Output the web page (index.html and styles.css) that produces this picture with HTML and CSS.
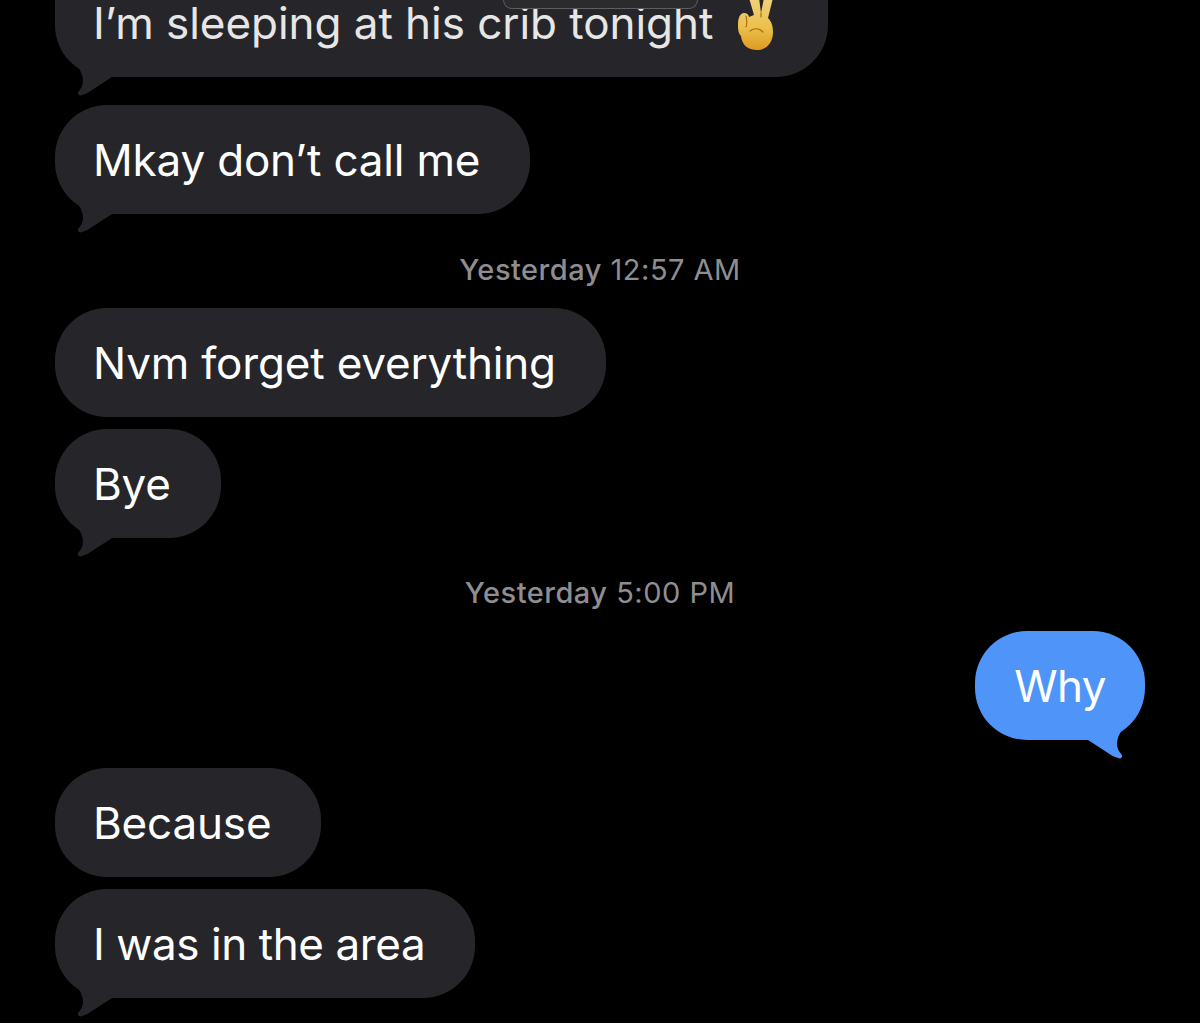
FILE: index.html
```html
<!DOCTYPE html>
<html>
<head>
    <meta charset="utf-8">
    <title>Messages</title>
    <link rel="stylesheet" href="styles.css">
</head>
<body>
    <div class="thread">
        <div class="bubble in first dim">
            <span>I’m sleeping at his crib tonight</span>
            <svg class="emoji" viewBox="0 0 42 50">
                <defs>
                    <linearGradient id="hand" x1="0" y1="0" x2="0" y2="1">
                        <stop offset="0" stop-color="#efd27c"/>
                        <stop offset="0.55" stop-color="#ecc14c"/>
                        <stop offset="1" stop-color="#dd9c20"/>
                    </linearGradient>
                </defs>
                <path fill="url(#hand)" d="M14 -2 L24 -2 L26 13 L29 -2 L38 -2 L33 18 C37 22 38 27 38 32 C38 43 31 50 22 50 C13 50 7 45 6 36 C3 33 3 28 3 24 C3 18 5 13 9 13 C12 13 14 15 14 17 L19 15 Z"/>
                <path fill="none" stroke="#a8701a" stroke-width="1.2" stroke-linecap="round" d="M11 16 C12 20 12 24 11 27 M15 31 C20 27 25 29 28 32 M26 13 L26 17"/>
            </svg>
            <svg class="tail" viewBox="0 0 44 40"><path d="M10 0 L8 8 C11 12 13 17 13 22 C13 26 11 30 8 33 C7 36 10 37 12 36 C16 35 19 33 22 31 L42 18 L42 0 Z"/></svg>
        </div>
        <div class="notch"></div>

        <div class="bubble in gap-l">
            Mkay don’t call me
            <svg class="tail" viewBox="0 0 44 40"><path d="M10 0 L8 8 C11 12 13 17 13 22 C13 26 11 30 8 33 C7 36 10 37 12 36 C16 35 19 33 22 31 L42 18 L42 0 Z"/></svg>
        </div>

        <div class="stamp stamp-one"><b>Yesterday</b> 12:57 AM</div>

        <div class="bubble in">Nvm forget everything</div>
        <div class="bubble in gap-s">
            Bye
            <svg class="tail" viewBox="0 0 44 40"><path d="M10 0 L8 8 C11 12 13 17 13 22 C13 26 11 30 8 33 C7 36 10 37 12 36 C16 35 19 33 22 31 L42 18 L42 0 Z"/></svg>
        </div>

        <div class="stamp stamp-two"><b>Yesterday</b> 5:00 PM</div>

        <div class="bubble out">
            Why
            <svg class="tail" viewBox="0 0 44 40"><path d="M10 0 L8 8 C11 12 13 17 13 22 C13 26 11 30 8 33 C7 36 10 37 12 36 C16 35 19 33 22 31 L42 18 L42 0 Z"/></svg>
        </div>

        <div class="bubble in gap-l">Because</div>
        <div class="bubble in gap-s tight">
            I was in the area
            <svg class="tail" viewBox="0 0 44 40"><path d="M10 0 L8 8 C11 12 13 17 13 22 C13 26 11 30 8 33 C7 36 10 37 12 36 C16 35 19 33 22 31 L42 18 L42 0 Z"/></svg>
        </div>
    </div>
</body>
</html>
```

FILE: styles.css
```css
html, body {
    margin: 0;
    height: 100%;
    background-color: #000;
    overflow: hidden;
}
.thread {
    position: relative;
    height: 1023px;
    padding: 0 55px;
    display: flex;
    flex-direction: column;
    align-items: flex-start;
    font-family: Inter, "Liberation Sans", sans-serif;
}
.bubble {
    position: relative;
    box-sizing: border-box;
    height: 109px;
    display: flex;
    align-items: center;
    border-radius: 52px;
    font-size: 44px;
    line-height: 1;
    letter-spacing: -0.18px;
    color: #fff;
    white-space: nowrap;
}
.in {
    padding: 0 50px 0 38px;
    background-color: #26262a;
    fill: #26262a;
}
.out {
    align-self: flex-end;
    padding: 0 39px;
    background-color: #4f94f8;
    fill: #4f94f8;
    letter-spacing: -0.6px;
}
/* runs off the top of the screen, only the lower part shows */
.first {
    height: 77px;
    width: 773px;
    padding-bottom: 32px;
    border-radius: 0 0 52px 52px;
    letter-spacing: -0.05px;
}
.dim {
    color: #e6e6e6;
}
.tight {
    letter-spacing: -0.42px;
}
.gap-s {
    margin-top: 12px;
}
.gap-l {
    margin-top: 28px;
}
.tail {
    position: absolute;
    left: 15px;
    bottom: -22px;
    width: 44px;
    height: 40px;
}
.out .tail {
    left: auto;
    right: 15px;
    transform: scaleX(-1);
}
.emoji {
    position: absolute;
    left: 680px;
    top: 0;
    width: 42px;
    height: 50px;
    overflow: hidden;
}
.notch {
    position: absolute;
    left: 503px;
    top: 0;
    width: 195px;
    height: 9px;
    box-sizing: border-box;
    border-radius: 0 0 16px 16px;
    background-color: #2b2b2e;
    border: 1px solid #5e5e60;
    border-top: 0;
}
.stamp {
    align-self: center;
    font-size: 29px;
    line-height: 34px;
    letter-spacing: 0.5px;
    color: #8e8e92;
    white-space: nowrap;
}
.stamp b {
    font-weight: 500;
}
.stamp-one {
    margin-top: 39px;
    margin-bottom: 21px;
}
.stamp-two {
    margin-top: 38px;
    margin-bottom: 21px;
}
```
